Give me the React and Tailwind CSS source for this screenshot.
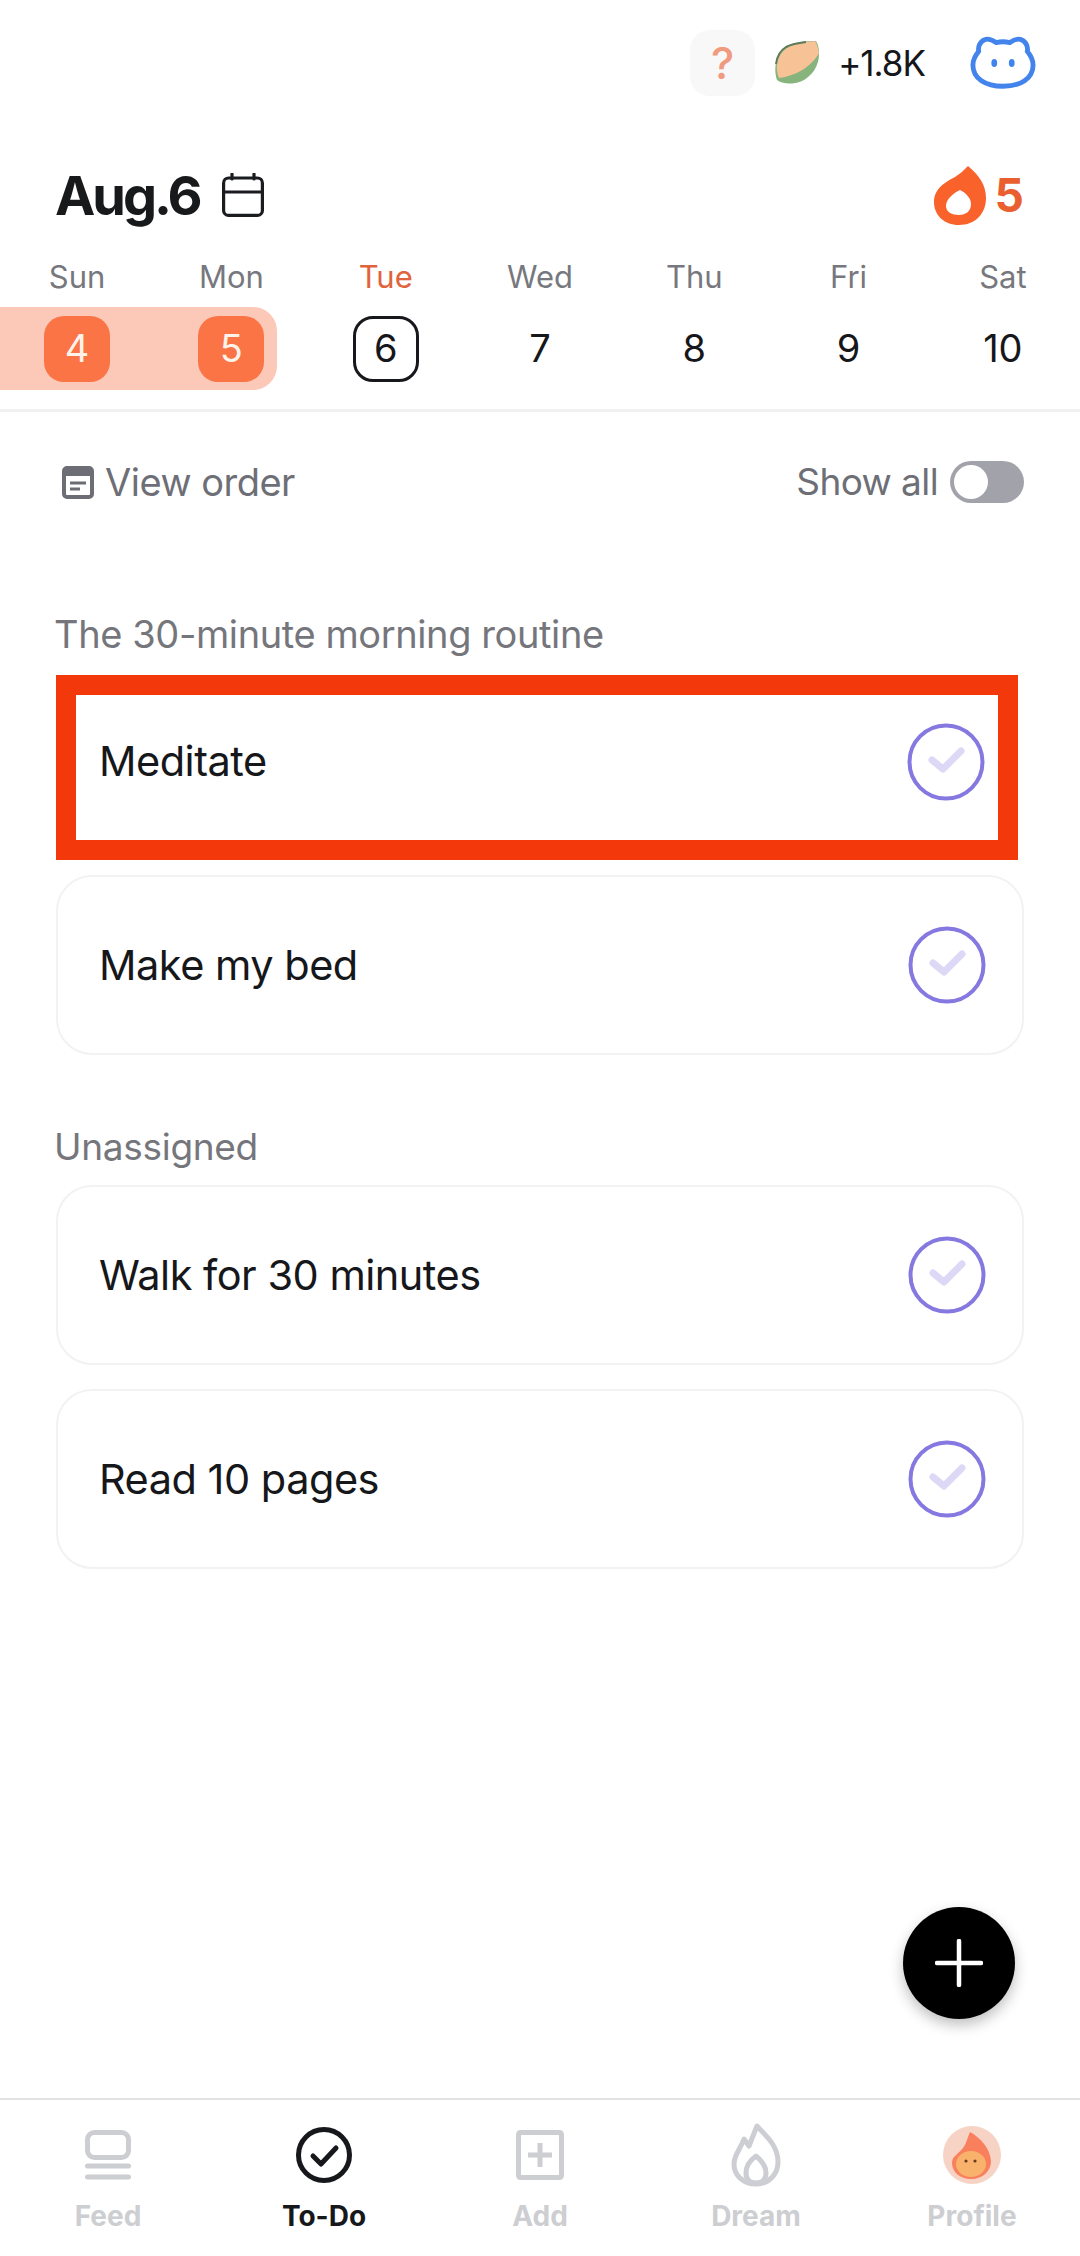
import React from "react";

const days = [
  { label: "Sun", num: "4", kind: "done" },
  { label: "Mon", num: "5", kind: "done" },
  { label: "Tue", num: "6", kind: "today" },
  { label: "Wed", num: "7" },
  { label: "Thu", num: "8" },
  { label: "Fri", num: "9" },
  { label: "Sat", num: "10" },
];

function Leaf() {
  return (
    <svg width="46" height="46" viewBox="0 0 46 46">
      <path d="M3 40C-1 28 2 14 12 7C20 2 30 1 42 1C44 4 45 8 45 14C45 26 38 36 28 41C18 45 8 44 3 40Z" fill="#87b47d" />
      <path d="M5 38C0 26 4 14 13 8C20 3 30 2 41 1C43 4 44 8 45 13C38 26 22 36 5 38Z" fill="#f6c296" />
      <path d="M2 24C3 15 7 10 12 7C18 4 24 3 32 2" fill="none" stroke="#5f7a58" strokeWidth="2" />
    </svg>
  );
}

function Pig() {
  return (
    <svg width="66" height="56" viewBox="0 0 68 56">
      <path
        d="M15 4C20 2 24 5 27 7C31 6 37 6 41 7C44 5 48 2 53 4C58 6 60 12 59 16C63 21 65 26 65 30C65 44 52 52 34 52C16 52 3 44 3 30C3 26 5 21 9 16C8 12 10 6 15 4Z"
        fill="none"
        stroke="#4384ec"
        strokeWidth="5"
        strokeLinejoin="round"
      />
      <ellipse cx="25" cy="28" rx="3" ry="4" fill="#4384ec" />
      <ellipse cx="43" cy="28" rx="3" ry="4" fill="#4384ec" />
    </svg>
  );
}

function Drop() {
  return (
    <svg width="54" height="60" viewBox="0 0 54 60">
      <path
        fillRule="evenodd"
        d="M35 1C46 10 53 20 53 33C53 49 42 60 26 60C11 60 1 50 1 37C1 24 12 17 22 12C27 9 31 5 35 1ZM27 25C19 29 13 35 13 41C13 47 19 50 26 50C33 50 38 46 38 39C38 33 33 28 27 25Z"
        fill="#f9622a"
      />
    </svg>
  );
}

function CalendarIcon() {
  return (
    <svg width="42" height="44" viewBox="0 0 42 44" fill="none" stroke="#1b1c1f" strokeWidth="3.2" className="ml-[22px]">
      <rect x="1.6" y="5" width="38.8" height="37.4" rx="5" />
      <path d="M1.6 19H40.4" />
      <path d="M10 1V6M32 1V6" strokeLinecap="round" />
    </svg>
  );
}

function OrderIcon() {
  return (
    <svg width="32" height="33" viewBox="0 0 32 33" fill="none">
      <rect x="2" y="2" width="28" height="29" rx="3" stroke="#6d6e75" strokeWidth="4" />
      <path d="M2 7H30" stroke="#6d6e75" strokeWidth="6" />
      <path d="M8 17H24M8 23H18" stroke="#6d6e75" strokeWidth="3" />
    </svg>
  );
}

function CheckCircle() {
  return (
    <svg width="78" height="78" viewBox="0 0 78 78" fill="none" className="shrink-0">
      <circle cx="39" cy="39" r="36.5" stroke="#8578e0" strokeWidth="4" />
      <path d="M25 37L36 46L54 28" stroke="#dcd8f6" strokeWidth="7" strokeLinecap="round" strokeLinejoin="round" />
    </svg>
  );
}

function TaskCard({ title, marked }) {
  if (marked) {
    return (
      <div className="w-[962px] h-[185px] border-[20px] border-[#f3390c] flex items-center justify-between pl-[23px] pr-[13px] pb-[12px]">
        <span className="text-[41.5px] text-[#16171a] tracking-[-0.5px]">{title}</span>
        <CheckCircle />
      </div>
    );
  }
  return (
    <div className="h-[180px] border-2 border-[#f2f2f3] rounded-[36px] flex items-center justify-between pl-[41px] pr-[36px]">
      <span className="text-[41.5px] text-[#16171a] tracking-[-0.5px]">{title}</span>
      <CheckCircle />
    </div>
  );
}

function NavFeed() {
  return (
    <svg width="46" height="50" viewBox="0 0 46 50" fill="none" stroke="#cdced1">
      <rect x="2.5" y="2.5" width="41" height="25" rx="7" strokeWidth="5" />
      <path d="M2.5 36H43.5M2.5 47H43.5" strokeWidth="5" strokeLinecap="round" />
    </svg>
  );
}

function NavTodo() {
  return (
    <svg width="56" height="56" viewBox="0 0 56 56" fill="none" stroke="#17181b">
      <circle cx="28" cy="28" r="25.5" strokeWidth="5" />
      <path d="M17 29L25 37L40 21" strokeWidth="5" strokeLinecap="round" strokeLinejoin="round" />
    </svg>
  );
}

function NavAdd() {
  return (
    <svg width="48" height="50" viewBox="0 0 48 50" fill="none" stroke="#cdced1" strokeWidth="5">
      <rect x="2.5" y="2.5" width="43" height="45" rx="2" />
      <path d="M12 25H36M24 13V37" />
    </svg>
  );
}

function NavDream() {
  return (
    <svg width="50" height="64" viewBox="0 0 50 64" fill="none" stroke="#cdced3" strokeWidth="5" strokeLinejoin="round">
      <path d="M26 3C34 12 47 22 47 39C47 52 37 61 25 61C12 61 3 52 3 41C3 32 9 27 13 16L18 23Z" />
      <path d="M25 33C18 38 15 44 15 50C15 57 19 60 25 60C31 60 35 56 35 50C35 44 31 38 25 33Z" />
    </svg>
  );
}

function NavProfile() {
  return (
    <svg width="58" height="60" viewBox="0 0 58 60">
      <circle cx="29" cy="30" r="29" fill="#f6d3c4" />
      <path d="M27 7C36 12 47 22 48 36C48 46 40 54 28 54C17 54 9 47 9 38C9 30 17 29 22 20C24 16 25 11 27 7Z" fill="#fa7f5d" />
      <ellipse cx="28" cy="39" rx="15" ry="13" fill="#f8b26b" />
      <circle cx="23" cy="36" r="1.6" fill="#6b3a24" />
      <circle cx="32" cy="36" r="1.6" fill="#6b3a24" />
    </svg>
  );
}

const nav = [
  { label: "Feed", icon: <NavFeed /> },
  { label: "To-Do", icon: <NavTodo />, active: true },
  { label: "Add", icon: <NavAdd /> },
  { label: "Dream", icon: <NavDream /> },
  { label: "Profile", icon: <NavProfile /> },
];

export default function App() {
  return (
    <div className="relative w-[1080px] h-[2256px] bg-white flex flex-col overflow-hidden font-['Inter',sans-serif]">
      {/* top row */}
      <div className="flex items-center justify-end h-[66px] mt-[30px] pr-[44px]">
        <div className="w-[65px] h-[66px] rounded-[20px] bg-[#f8f8f8] flex items-center justify-center text-[44px] font-medium text-[#f09a80]">?</div>
        <div className="ml-[19px]"><Leaf /></div>
        <span className="ml-[18px] text-[35px] tracking-[-1px] text-[#16171a]">+1.8K</span>
        <div className="ml-[45px]"><Pig /></div>
      </div>

      {/* date heading */}
      <div className="flex items-center justify-between mt-[68px] pl-[55px] pr-[56px] h-[62px]">
        <div className="flex items-center">
          <span className="text-[54px] font-bold tracking-[-3px] text-[#18191b]">Aug.6</span>
          <CalendarIcon />
        </div>
        <div className="flex items-center">
          <Drop />
          <span className="ml-[8px] text-[46px] font-bold text-[#ea5f2f]">5</span>
        </div>
      </div>

      {/* week */}
      <div className="grid grid-cols-7 mt-[28px] text-center text-[31px] leading-[45px] text-[#77787e]">
        {days.map((d) => (
          <span key={d.label} className={d.kind === "today" ? "text-[#e0633d]" : ""}>{d.label}</span>
        ))}
      </div>
      <div className="relative grid grid-cols-7 mt-[8px] h-[83px] items-center text-[38px] text-[#16171a]">
        <div className="absolute left-0 top-0 w-[277px] h-[83px] bg-[#fcc9b8] rounded-r-[24px]" />
        {days.map((d) => (
          <div key={d.num} className="relative flex justify-center">
            <span
              className={
                d.kind === "done"
                  ? "w-[66px] h-[66px] rounded-[20px] bg-[#fb7445] text-[#fdf3ea] flex items-center justify-center"
                  : d.kind === "today"
                  ? "w-[66px] h-[66px] rounded-[20px] border-[3px] border-[#17181b] flex items-center justify-center"
                  : "h-[66px] flex items-center justify-center"
              }
            >
              {d.num}
            </span>
          </div>
        ))}
      </div>
      <div className="mt-[19px] h-[3px] bg-[#f1f1f2]" />

      {/* view order / show all */}
      <div className="flex items-center justify-between mt-[49px] pl-[62px] pr-[56px] h-[42px]">
        <div className="flex items-center">
          <OrderIcon />
          <span className="ml-[11px] text-[38px] text-[#6e6f76] tracking-[-0.5px]">View order</span>
        </div>
        <div className="flex items-center">
          <span className="text-[37px] text-[#6e6f76] tracking-[-0.6px]">Show all</span>
          <div className="ml-[12px] w-[74px] h-[42px] rounded-full bg-[#a2a2ab] p-[4px]">
            <div className="w-[34px] h-[34px] rounded-full bg-white" />
          </div>
        </div>
      </div>

      {/* tasks */}
      <div className="flex flex-col mt-[109px] px-[56px]">
        <div className="-ml-[2px] text-[38px] leading-[44px] text-[#75767c] tracking-[-0.4px]">The 30-minute morning routine</div>
        <div className="mt-[19px]"><TaskCard title="Meditate" marked /></div>
        <div className="mt-[15px]"><TaskCard title="Make my bed" /></div>
        <div className="-ml-[2px] mt-[70px] text-[37px] leading-[44px] text-[#75767c] tracking-[-0.3px]">Unassigned</div>
        <div className="mt-[16px]"><TaskCard title="Walk for 30 minutes" /></div>
        <div className="mt-[24px]"><TaskCard title="Read 10 pages" /></div>
      </div>

      {/* floating add button */}
      <button className="absolute left-[903px] top-[1907px] w-[112px] h-[112px] rounded-full bg-black flex items-center justify-center shadow-[0_6px_14px_rgba(0,0,0,0.25)]">
        <svg width="48" height="48" viewBox="0 0 48 48" stroke="#fff" strokeWidth="4.5" strokeLinecap="round">
          <path d="M2 24H46M24 2V46" />
        </svg>
      </button>

      {/* bottom nav */}
      <div className="mt-auto h-[158px] border-t-2 border-[#e2e2e4] grid grid-cols-5">
        {nav.map((n) => (
          <div key={n.label} className="flex flex-col items-center">
            <div className="h-[90px] flex items-center justify-center pt-[20px]">{n.icon}</div>
            <span className={`mt-[9px] text-[28px] font-bold leading-[34px] ${n.active ? "text-[#17181b]" : "text-[#cdced1]"}`}>{n.label}</span>
          </div>
        ))}
      </div>
    </div>
  );
}
